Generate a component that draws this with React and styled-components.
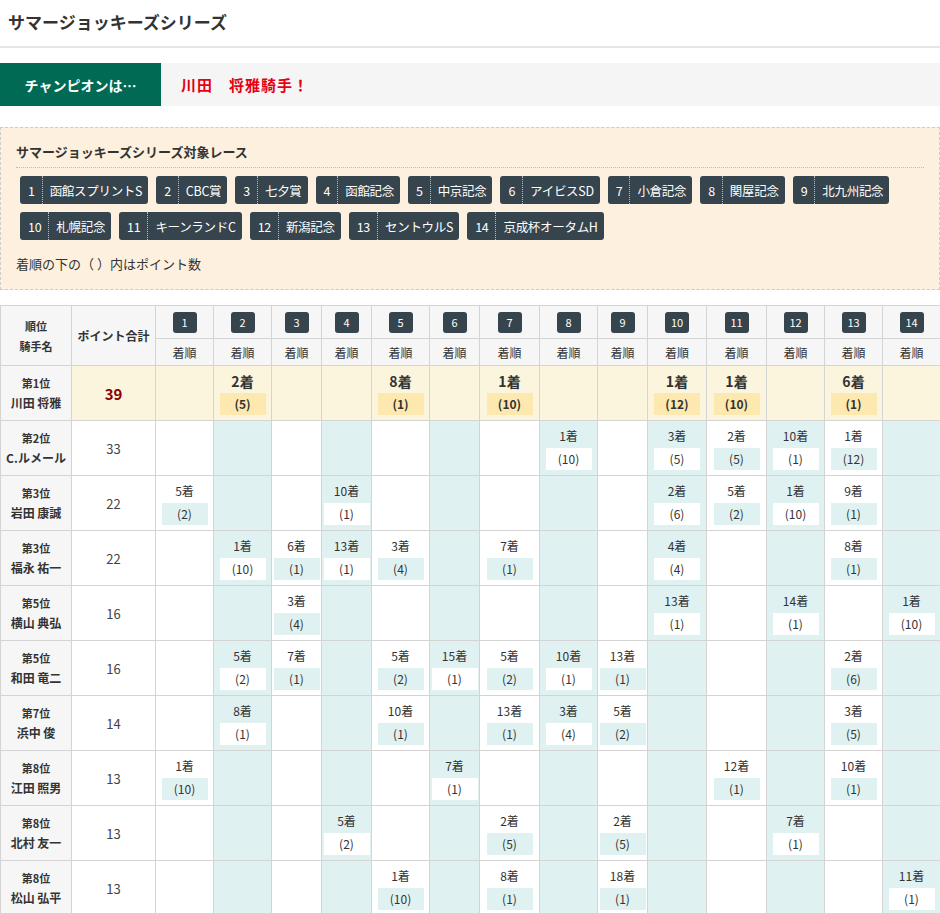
import React from "react";
import styled, { createGlobalStyle } from "styled-components";

const G = createGlobalStyle`
  body{margin:0;font-family:"Noto Sans CJK JP","Noto Sans",sans-serif;color:#333;background:#fff;}
`;
const Title = styled.h1`margin:0;padding:10px 8px 12px;font-size:17px;font-weight:bold;color:#333;border-bottom:2px solid #e6e6e6;line-height:24px;`;
const Champ = styled.div`display:flex;margin-top:15px;background:#f5f5f5;height:43px;align-items:center;`;
const ChampLabel = styled.div`width:161px;height:100%;background:#006a55;color:#fff;font-weight:bold;font-size:14px;display:flex;align-items:center;justify-content:center;`;
const ChampName = styled.div`color:#e60012;font-weight:bold;font-size:15px;padding-left:20px;letter-spacing:1px;`;
const RaceBox = styled.div`margin-top:21px;background:#fdf0de;border:1px dashed #ccc;padding:14px 15px 16px;`;
const RaceTitle = styled.div`font-weight:bold;font-size:13px;padding-bottom:6px;border-bottom:1px dotted #bbb;margin-bottom:8px;`;
const Tags = styled.div`display:flex;flex-wrap:wrap;gap:8px 8px;padding-left:4px;`;
const Tag = styled.div`display:flex;background:#35444d;color:#fff;border-radius:3px;font-size:12.5px;letter-spacing:-0.3px;height:28px;align-items:center;`;
const TagNum = styled.span`padding:0 7px 0 8px;border-right:1px dotted #bbb;height:100%;display:flex;align-items:center;`;
const TagName = styled.span`padding:0 6px 0 7px;`;
const Note = styled.div`margin-top:14px;font-size:13px;`;
const Table = styled.table`margin-top:15px;width:100%;border-collapse:collapse;table-layout:fixed;font-size:12px;`;
const Th = styled.th`border:1px solid #d4d4d4;background:#f6f6f6;font-weight:${p=>p.$b?"bold":"normal"};font-size:${p=>p.$s||12}px;padding:0;height:${p=>p.$h||"auto"};`;
const NumBadge = styled.span`display:inline-block;background:#35444d;color:#fff;border-radius:3px;width:24px;height:21px;line-height:21px;font-size:11px;`;
const Td = styled.td`border:1px solid #d4d4d4;text-align:center;height:54px;padding:0;vertical-align:middle;background:${p=>p.$bg};`;
const Rank = styled(Td)`background:#f6f6f6;font-weight:bold;font-size:11px;line-height:20px;`;
const Pts = styled(Td)`font-size:${p=>p.$top?15:13}px;font-weight:${p=>p.$top?"bold":"normal"};color:${p=>p.$top?"#8b0000":"#444"};`;
const Place = styled.div`font-size:${p=>p.$top?14:12}px;font-weight:${p=>p.$top?"bold":"normal"};line-height:18px;`;
const Pt = styled.div`margin:3px auto 0;width:46px;height:22px;line-height:22px;background:${p=>p.$bg};font-size:12px;font-weight:${p=>p.$top?"bold":"normal"};`;

const races=["函館スプリントS","CBC賞","七夕賞","函館記念","中京記念","アイビスSD","小倉記念","関屋記念","北九州記念","札幌記念","キーンランドC","新潟記念","セントウルS","京成杯オータムH"];
const widths=[58,58,50,50,58,50,60,58,50,59,60,58,58,58];
const rows=[
 ["第1位","川田 将雅",39,{2:[2,5],5:[8,1],7:[1,10],10:[1,12],11:[1,10],13:[6,1]}],
 ["第2位","C.ルメール",33,{8:[1,10],10:[3,5],11:[2,5],12:[10,1],13:[1,12]}],
 ["第3位","岩田 康誠",22,{1:[5,2],4:[10,1],10:[2,6],11:[5,2],12:[1,10],13:[9,1]}],
 ["第3位","福永 祐一",22,{2:[1,10],3:[6,1],4:[13,1],5:[3,4],7:[7,1],10:[4,4],13:[8,1]}],
 ["第5位","横山 典弘",16,{3:[3,4],10:[13,1],12:[14,1],14:[1,10]}],
 ["第5位","和田 竜二",16,{2:[5,2],3:[7,1],5:[5,2],6:[15,1],7:[5,2],8:[10,1],9:[13,1],13:[2,6]}],
 ["第7位","浜中 俊",14,{2:[8,1],5:[10,1],7:[13,1],8:[3,4],9:[5,2],13:[3,5]}],
 ["第8位","江田 照男",13,{1:[1,10],6:[7,1],11:[12,1],13:[10,1]}],
 ["第8位","北村 友一",13,{4:[5,2],7:[2,5],9:[2,5],12:[7,1]}],
 ["第8位","松山 弘平",13,{5:[1,10],7:[8,1],9:[18,1],14:[11,1]}],
];

export default function App(){
 return <>
  <G/>
  <Title>サマージョッキーズシリーズ</Title>
  <Champ><ChampLabel>チャンピオンは…</ChampLabel><ChampName>川田　将雅騎手！</ChampName></Champ>
  <RaceBox>
   <RaceTitle>サマージョッキーズシリーズ対象レース</RaceTitle>
   <Tags>{races.map((r,i)=><Tag key={i}><TagNum>{i+1}</TagNum><TagName>{r}</TagName></Tag>)}</Tags>
   <Note>着順の下の（ ）内はポイント数</Note>
  </RaceBox>
  <Table>
   <colgroup><col style={{width:71}}/><col style={{width:84}}/>{widths.map((w,i)=><col key={i} style={{width:w}}/>)}</colgroup>
   <thead>
    <tr>
     <Th rowSpan={2} $b $s={11} style={{lineHeight:"20px"}}>順位<br/>騎手名</Th>
     <Th rowSpan={2} $b>ポイント合計</Th>
     {widths.map((_,i)=><Th key={i} $h="32px"><NumBadge>{i+1}</NumBadge></Th>)}
    </tr>
    <tr>{widths.map((_,i)=><Th key={i} $h="26px">着順</Th>)}</tr>
   </thead>
   <tbody>
    {rows.map(([rk,nm,p,d],ri)=>{const top=ri===0;return <tr key={ri}>
     <Rank>{rk}<br/><span style={{fontSize:12}}>{nm}</span></Rank>
     <Pts $top={top} $bg={top?"#fbf5de":"#fff"}>{p}</Pts>
     {widths.map((_,c)=>{const n=c+1;const even=n%2===0;const bg=top?"#fbf5de":even?"#e0f1f1":"#fff";const bb=top?"#fde9b0":even?"#fff":"#e0f1f1";const v=d[n];
      return <Td key={c} $bg={bg}>{v&&<><Place $top={top}>{v[0]}着</Place><Pt $bg={bb} $top={top}>({v[1]})</Pt></>}</Td>;})}
    </tr>;})}
   </tbody>
  </Table>
 </>;
}
